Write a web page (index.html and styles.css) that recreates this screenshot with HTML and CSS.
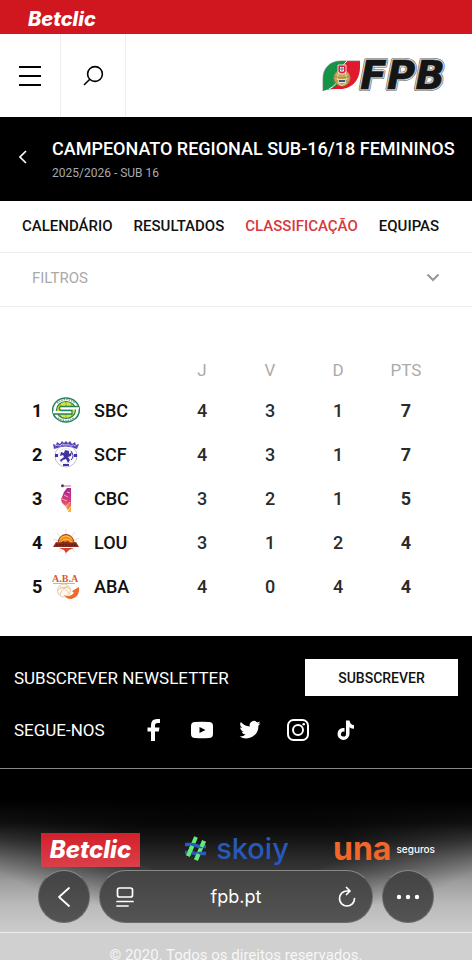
FILE: index.html
```html
<!DOCTYPE html>
<html lang="pt">
<head>
<meta charset="utf-8">
<meta name="viewport" content="width=device-width, initial-scale=1">
<title>FPB - Classificação</title>
<link rel="stylesheet" href="styles.css">
</head>
<body>
<div class="page">
  <a class="sponsor" href="#" aria-label="Betclic">Betclic</a>

  <header class="header">
    <button class="header-btn menu" aria-label="Menu">
      <svg width="22" height="22" viewBox="0 0 22 22"><path d="M0 2h22M0 11h22M0 20h22" stroke="#000" stroke-width="2"/></svg>
    </button>
    <button class="header-btn search" aria-label="Pesquisar">
      <svg width="22" height="22" viewBox="0 0 22 22" fill="none" stroke="#000" stroke-width="1.6"><circle cx="13" cy="9" r="7.4"/><path d="M7.800 14.200L2 20"/></svg>
    </button>
    <a class="brand" href="#" aria-label="FPB">
      <svg width="130" height="50" viewBox="0 -8 130 50">
        <path d="M1 32V20C1 9 8 2 19 2h6l-8 28h-4q-8 0-12 2z" fill="#159447"/>
        <path d="M25 2h13v6c0 12-7 22-20 22H9q7-3 9-11 1-11 7-17z" fill="#e1192c"/>
        <path d="M1 32V20C1 9 8 2 19 2h19" fill="none" stroke="#777" stroke-width=".7"/>
        <path d="M25 2q-5 4-7 13-2 11-11 15" fill="none" stroke="#fff" stroke-width="1"/>
        <circle cx="20" cy="19" r="8" fill="#c9a65c" stroke="#a78b54"/>
        <ellipse cx="20" cy="19" rx="4.500" ry="7.500" fill="none" stroke="#eedaa0"/>
        <path d="M12.500 17q7.500 4 15 0M12.500 23q7.500-4 15 0" fill="none" stroke="#9a8045" stroke-width=".8"/>
        <path d="M16 6h8v7q-4 4-8 0z" fill="#d91e31" stroke="#fff" stroke-width=".8"/>
        <path d="M18 8h4v4q-2 2-4 0z" fill="#fff"/><path d="M20 8v5M18 10h4" stroke="#3156a0" stroke-width=".8"/>
        <path d="M16 20h8l-1 4h-6z" fill="#ddd"/><path d="M17 21h6v2h-6z" fill="#43597a"/>
        <g class="fpb">
          <text x="38" y="30" class="fpb-outer">FPB</text>
          <text x="38" y="30" class="fpb-light">FPB</text>
          <text x="38" y="30" class="fpb-inner">FPB</text>
          <text x="38" y="30" class="fpb-fill">FPB</text>
        </g>
      </svg>
    </a>
  </header>

  <section class="competition">
    <a class="back" href="#" aria-label="Voltar"><svg width="8" height="14" viewBox="0 0 8 14"><path d="M7 1L1 7l6 6" fill="none" stroke="#fff" stroke-width="1.600"/></svg></a>
    <div>
      <h1>CAMPEONATO REGIONAL SUB-16/18 FEMININOS</h1>
      <p>2025/2026 - SUB 16</p>
    </div>
  </section>

  <nav class="tabs">
    <a href="#">CALENDÁRIO</a>
    <a href="#">RESULTADOS</a>
    <a href="#" class="active" aria-current="page">CLASSIFICAÇÃO</a>
    <a href="#">EQUIPAS</a>
  </nav>

  <button class="filters">FILTROS
    <svg width="14" height="10" viewBox="0 0 14 10"><path d="M1.500 1.500L7 7l5.500-5.500" fill="none" stroke="#999" stroke-width="2.200"/></svg>
  </button>

  <main class="standings">
    <table>
      <thead><tr><td></td><th scope="col">J</th><th scope="col">V</th><th scope="col">D</th><th scope="col">PTS</th></tr></thead>
      <tbody>
        <tr><th scope="row"><div class="team"><b>1</b>
          <svg width="28" height="28" viewBox="0 0 28 28"><ellipse cx="14" cy="14" rx="13.300" ry="12" fill="#fff" stroke="#27805a" stroke-width="1.500"/><path d="M5 7q9-7 18 0M6 22q8 5 16 0" fill="none" stroke="#77aa8c" stroke-width="1.500" stroke-dasharray="1.500 1"/><ellipse cx="14" cy="14" rx="9.500" ry="8.500" fill="#d5e83a" stroke="#27805a" stroke-width="1.200"/><path d="M14 6v16M8 8q5 6 0 12M20 8q-5 6 0 12" fill="none" stroke="#7ea53a" stroke-width=".8"/><path d="M8 10.500h19v3H9zM1 15h19v3H1z" fill="#fff"/><path d="M27 10.500H8q-2 3 1 4h11v3.500H1" fill="none" stroke="#27805a" stroke-width="1.300"/></svg>
          <span>SBC</span></div></th><td>4</td><td>3</td><td>1</td><td class="pts">7</td></tr>
        <tr><th scope="row"><div class="team"><b>2</b>
          <svg width="28" height="28" viewBox="0 0 28 28"><path d="M2 9L1 4l3 1 1-3 3 2 2-3 2 2 2-2 2 2 2-2 2 3 3-2 1 3 3-1-2 5q-11-5-23 0z" fill="#5545b5"/><path d="M3 6l3-1 2 1 2-2 3 1 3-1 3 2 2-1 3 1" fill="none" stroke="#d2ccef" stroke-width=".8"/><circle cx="14" cy="16" r="11" fill="none" stroke="#a29ed0" stroke-width=".7"/><circle cx="14" cy="16" r="7.500" fill="#fff" stroke="#d4d1e9" stroke-width=".6"/><path d="M9 12l3 1 1-3 4 1v3l3-2-1 4-3 1 2 3-2 3-2-4-3 1-2 2-1-2 4-3-1-2-3 1zM3 14h3v3H3zM22 14h3v3h-3zM11 24h6v2h-6z" fill="#40349f"/><path d="M19 11q4 5 0 9" fill="none" stroke="#40349f"/></svg>
          <span>SCF</span></div></th><td>4</td><td>3</td><td>1</td><td class="pts">7</td></tr>
        <tr><th scope="row"><div class="team"><b>3</b>
          <svg width="28" height="28" viewBox="0 0 28 28"><defs><linearGradient id="cbc" x2="0" y2="1"><stop stop-color="#a72596"/><stop offset=".55" stop-color="#db3b78"/><stop offset="1" stop-color="#ffc21d"/></linearGradient></defs><circle cx="10.500" cy="1.800" r="1.500" fill="#573060"/><path d="M12 2h7" stroke="#bd6798"/><path d="M19 4v24h-3q-1-6-5-8-3-3-1-7 1-5 5-9z" fill="url(#cbc)"/><path d="M12 11l4 2M10 15l5 2M15 8l3 1M14 23l4-5M16 27l3-5" stroke="#fff" stroke-width=".6"/></svg>
          <span>CBC</span></div></th><td>3</td><td>2</td><td>1</td><td class="pts">5</td></tr>
        <tr><th scope="row"><div class="team"><b>4</b>
          <svg width="28" height="28" viewBox="0 0 28 28"><path d="M14 1v7M5 5l4 5M23 4l-4 5M1 11l6 2M27 10l-6 3M14 27v-6M7 24l4-5M23 24l-5-5" stroke="#e8c8c0" stroke-width=".7"/><path d="M6 15a8 8.500 0 0 1 16 0z" fill="#ee8b1c" stroke="#a13d22"/><path d="M8 11q6-6 12 0M9 14q5-6 11 0" fill="none" stroke="#ffcf45" stroke-width=".9"/><path d="M1 19l3-5 4 1 3-2 2 1 3-1 2 2 6-1 3 5z" fill="#8b2a20"/><path d="M4 17h20" stroke="#42222288" stroke-width="2" stroke-dasharray="2 1"/><path d="M7 20h15l-5 2-3 3-2-3z" fill="#cf4332"/></svg>
          <span>LOU</span></div></th><td>3</td><td>1</td><td>2</td><td class="pts">4</td></tr>
        <tr><th scope="row"><div class="team"><b>5</b>
          <svg width="28" height="28" viewBox="0 0 28 28"><text x="0" y="10" class="aba">A.B.A</text><path d="M1 11.500h22" stroke="#999" stroke-width=".7"/><circle cx="12" cy="18.500" r="6.500" fill="#fff8ee" stroke="#dfbb99" stroke-width=".8"/><path d="M6 18q6-5 12-1M8 23q2-7 8-9M8 15q7 1 9 7" fill="none" stroke="#e8b68a" stroke-width=".7"/><path d="M12 23q6 3 10-2l-2-2 7-4q1 8-5 11-6 3-10-3z" fill="#ed682c"/></svg>
          <span>ABA</span></div></th><td>4</td><td>0</td><td>4</td><td class="pts">4</td></tr>
      </tbody>
    </table>
  </main>

  <footer class="footer">
    <div class="newsletter"><h2>SUBSCREVER NEWSLETTER</h2><button>SUBSCREVER</button></div>
    <div class="social">
      <h2>SEGUE-NOS</h2>
      <div class="social-links">
        <a href="#" aria-label="Facebook"><svg width="24" height="24" viewBox="0 0 24 24"><path d="M9 23V13.500H5.500V9.500H9V7q0-6 6-6h3v4h-2.500Q13 5 13 7.500v2h4.500l-.7 4H13V23z" fill="#fff"/></svg></a>
        <a href="#" aria-label="YouTube"><svg width="24" height="24" viewBox="0 0 24 24"><path d="M5 4q7-.7 14 0 4 .2 4 4v8q0 3.800-4 4-7 .7-14 0-4-.2-4-4V8q0-3.800 4-4zm4.500 5v6l6-3z" fill="#fff" fill-rule="evenodd"/></svg></a>
        <a href="#" aria-label="Twitter"><svg width="24" height="24" viewBox="0 0 24 24"><path d="M22.500 5.200a9 9 0 0 1-2.500.7 4 4 0 0 0 1.900-2.400 9 9 0 0 1-2.700 1 4.300 4.300 0 0 0-7.400 4A12.300 12.300 0 0 1 2.900 4a4.300 4.300 0 0 0 1.300 5.700 4 4 0 0 1-2-.5 4.300 4.300 0 0 0 3.500 4.300 4 4 0 0 1-2 .1 4.300 4.300 0 0 0 4 3A9 9 0 0 1 1.500 18.400 12.300 12.300 0 0 0 20.400 7.500a9 9 0 0 0 2.100-2.300z" fill="#fff"/></svg></a>
        <a href="#" aria-label="Instagram"><svg width="24" height="24" viewBox="0 0 24 24" fill="none" stroke="#fff" stroke-width="2"><rect x="2" y="2" width="20" height="20" rx="5.500"/><circle cx="12" cy="12" r="5"/><circle cx="17.700" cy="6.300" r="1.300" fill="#fff" stroke="none"/></svg></a>
        <a href="#" aria-label="TikTok"><svg width="24" height="24" viewBox="0 0 24 24"><path d="M12 2.500h3.500q.5 4 4.500 4.700v3.600q-2.500 0-4.500-1.500V16a6 6 0 1 1-5-6v3.800A2.500 2.500 0 1 0 12 16z" fill="#fff"/></svg></a>
      </div>
    </div>
    <div class="partners">
      <a class="partner-betclic" href="#">Betclic</a>
      <a class="skoiy" href="#"><svg width="24" height="26" viewBox="0 0 24 26"><path d="M12 1L4 20M20 5l-8 19" stroke="#61ec73" stroke-width="4"/><path d="M1 8.500h6q3 0 5 1t5 1h5M1 16.500h5q3 0 5 1t5 0h6" fill="none" stroke="#285bc1" stroke-width="3.500"/><path d="M8.200 10L4 20M20 5l-2.500 6M14.500 18L12 24" stroke="#61ec73" stroke-width="4"/></svg>skoiy</a>
      <a class="una" href="#"><strong>una</strong><small>seguros</small></a>
    </div>
    <p class="copyright">© 2020. Todos os direitos reservados.</p>
  </footer>
</div>

<div class="browser-bar">
  <button class="round" aria-label="Retroceder"><svg width="14" height="22" viewBox="0 0 14 22"><path d="M12 2L2 11l10 9" fill="none" stroke="#fff" stroke-width="1.800" stroke-linecap="round" stroke-linejoin="round"/></svg></button>
  <div class="address">
    <button aria-label="Opções da página"><svg width="18" height="22" viewBox="0 0 18 22" fill="none" stroke="#fff" stroke-width="1.700" stroke-linecap="round"><rect x="1.500" y="2" width="15" height="9" rx="2"/><path d="M1 15.500h16M1 20h11"/></svg></button>
    <span>fpb.pt</span>
    <button aria-label="Recarregar"><svg width="18" height="22" viewBox="0 0 18 22" fill="none" stroke="#fff" stroke-width="1.700" stroke-linecap="round" stroke-linejoin="round"><path d="M12 5H9a7.500 7.500 0 1 0 7.500 7.500M8.500 1.500L12 5 8.500 8.500"/></svg></button>
  </div>
  <button class="round" aria-label="Mais"><svg width="24" height="6" viewBox="0 0 24 6" fill="#fff"><circle cx="3" cy="3" r="2.200"/><circle cx="12" cy="3" r="2.200"/><circle cx="21" cy="3" r="2.200"/></svg></button>
</div>
</body>
</html>
```
FILE: styles.css
```css
* { box-sizing: border-box; }
body {
  margin: 0;
  height: 100vh;
  position: relative;
  overflow: hidden;
  background: #fff;
  color: #111;
  font-family: Roboto, "Liberation Sans", sans-serif;
}
h1, h2, p { margin: 0; font-weight: 400; }
a { color: inherit; text-decoration: none; }
button { padding: 0; border: 0; background: none; color: inherit; font: inherit; }
svg { display: block; flex: none; }
.page { height: 100%; overflow: auto; scrollbar-width: none; }

.sponsor {
  display: block;
  height: 34px;
  padding-left: 28px;
  background: #d0161e;
  color: #fff;
  font: italic 800 20px/38px Inter, sans-serif;
}
.header { display: flex; height: 83px; }
.header-btn { display: grid; place-items: center; border-right: 1px solid #eee; }
.menu { width: 61px; }
.search { width: 65px; }
.brand { margin: 17px 20px 0 auto; }
.fpb { font: italic 700 39px "DejaVu Sans", sans-serif; stroke-linejoin: round; }
.fpb-outer { fill: none; stroke: #555; stroke-width: 4; }
.fpb-light { fill: none; stroke: #ddd; stroke-width: 3; }
.fpb-inner { fill: none; stroke: #777; stroke-width: 1; }
.fpb-fill { fill: #151515; }

.competition {
  display: flex;
  align-items: center;
  gap: 25px;
  height: 84px;
  padding: 0 0 0 19px;
  background: #000;
  color: #fff;
  white-space: nowrap;
}
.back { margin-top: -4px; }
.competition h1 { font-size: 18px; font-weight: 500; line-height: 28px; }
.competition p { font-size: 12px; line-height: 20px; color: #a5aab3; }

.tabs {
  display: flex;
  gap: 21px;
  height: 52px;
  padding-left: 22px;
  border-bottom: 1px solid #eee;
  font-size: 15px;
  font-weight: 500;
  line-height: 50px;
}
.active { color: #d8383e; }
.filters {
  display: flex;
  width: 100%;
  align-items: center;
  justify-content: space-between;
  height: 54px;
  padding: 0 32px 3px;
  border-bottom: 1px solid #eee;
  color: #aaa;
  font-size: 15px;
}

.standings { padding: 42px 32px 28px; }
table { width: 100%; border-collapse: collapse; table-layout: fixed; font-size: 18px; font-weight: 500; }
td, th { width: 16.67%; height: 44px; padding: 0; text-align: center; font-weight: 500; color: #2b2b2b; }
td:first-child, tbody th { width: auto; }
thead td, thead th { height: 39px; padding-top: 3px; color: #aaa; font-weight: 400; font-size: 17px; }
.team { display: flex; align-items: center; color: #111; }
.team b { width: 20px; text-align: left; font-weight: 700; }
.team span { margin-left: 14px; }
.pts { font-weight: 700; }
.aba { font: 700 10px "Liberation Serif", serif; fill: #d55b2b; }

.footer { background: #000; color: #fff; }
.footer h2 { font-size: 17px; }
.newsletter { display: flex; align-items: center; justify-content: space-between; padding: 23px 14px 0; }
.newsletter button { width: 153px; height: 37px; background: #fff; color: #111; font-size: 14px; font-weight: 500; }
.social { display: flex; align-items: center; gap: 37px; height: 73px; padding: 0 14px 4px; border-bottom: 1px solid #8a8580; }
.social-links { display: flex; gap: 24px; }
.partners {
  display: flex;
  align-items: flex-start;
  justify-content: space-between;
  height: 164px;
  padding: 64px 37px 0 41px;
  border-bottom: 1px solid #eee;
  background:
    radial-gradient(ellipse 54% 72px at 50% 76px, rgba(0, 0, 0, .6) 45%, rgba(0, 0, 0, 0)),
    linear-gradient(#000 30px, #101010 54px, #383838 72px, #6c6c6c 90px, #9c9c9c 112px, #bababa 136px, #ccc 163px);
}
.partner-betclic {
  width: 99px;
  height: 34px;
  background: linear-gradient(#d2202a, #da404a);
  color: #fff;
  text-align: center;
  font: italic 800 24px/34px Inter, sans-serif;
}
.skoiy { display: flex; align-items: center; gap: 8px; color: #2858b8; font: 500 29px/32px Inter, sans-serif; }
.una { display: flex; align-items: center; gap: 5px; font-family: Inter, sans-serif; line-height: 32px; }
.una strong { color: #f2662a; font-size: 32px; font-weight: 700; }
.una small { font-size: 10px; font-weight: 500; }
.copyright { height: 36px; padding-top: 12px; background: #d0d0d0; color: #f7f7f7; text-align: center; font-size: 15px; line-height: 20px; }

.browser-bar {
  position: absolute;
  right: 38px;
  bottom: 37px;
  left: 38px;
  display: flex;
  gap: 9px;
  color: #fff;
}
.round, .address {
  height: 53px;
  border: 1px solid #6a6a6a;
  border-top-color: #888;
  background: linear-gradient(#434343, #545454);
}
.round { display: grid; place-items: center; width: 52px; border-radius: 50%; }
.address { display: flex; flex: 1; align-items: center; justify-content: space-between; padding: 0 16px; border-radius: 27px; font: 18px Inter, sans-serif; }
```
